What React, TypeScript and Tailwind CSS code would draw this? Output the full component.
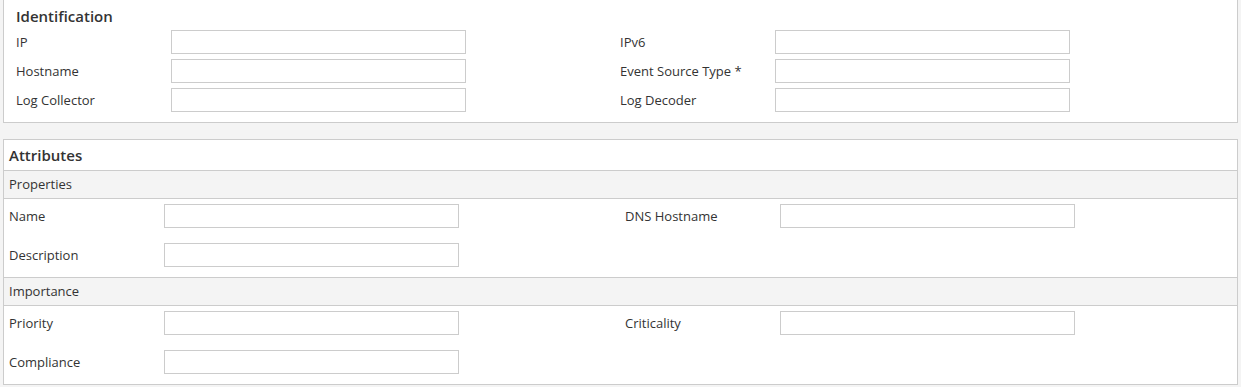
function Field({ label }: { label: string }) {
    return (
        <div className="flex items-center">
            <div className="w-[155px] shrink-0 text-[13px] leading-[24px] text-[#333]">{label}</div>
            <input className="w-[295px] h-[24px] border border-[#cccccc] bg-white outline-none" />
        </div>
    );
}

function AttrRow({ left, right }: { left: string; right?: string }) {
    return (
        <div className="grid grid-cols-[616px_1fr] h-[39px] pt-[5px]">
            <div className="pl-[5px]">
                <Field label={left} />
            </div>
            <div className="pl-[5px]">{right && <Field label={right} />}</div>
        </div>
    );
}

function SectionHeader({ title }: { title: string }) {
    return (
        <div className="h-[28px] bg-[#f4f4f4] border-b border-[#cccccc] pl-[5px] text-[13px] leading-[27px] text-[#333]">
            {title}
        </div>
    );
}

export default function App() {
    return (
        <div className="min-h-[387px] bg-[#f4f4f4] font-['Open_Sans',sans-serif] pb-[4px]">
            <div className="ml-[3px] w-[1235px] bg-white border-x border-b border-[#cccccc] px-[12px] pt-[6px] pb-[10px]">
                <h2 className="h-[20px] text-[15px] leading-[20px] font-semibold text-[#333]">Identification</h2>
                <div className="mt-[4px] grid grid-cols-[604px_1fr] gap-y-[5px]">
                    <Field label="IP" />
                    <Field label="IPv6" />
                    <Field label="Hostname" />
                    <Field label="Event Source Type *" />
                    <Field label="Log Collector" />
                    <Field label="Log Decoder" />
                </div>
            </div>

            <div className="ml-[3px] mt-[16px] w-[1235px] bg-white border border-[#cccccc]">
                <div className="h-[31px] border-b border-[#cccccc] pl-[5px] text-[15px] leading-[30px] font-semibold text-[#333]">
                    Attributes
                </div>
                <SectionHeader title="Properties" />
                <div className="border-b border-[#cccccc]">
                    <AttrRow left="Name" right="DNS Hostname" />
                    <AttrRow left="Description" />
                </div>
                <SectionHeader title="Importance" />
                <div>
                    <AttrRow left="Priority" right="Criticality" />
                    <AttrRow left="Compliance" />
                </div>
            </div>
        </div>
    );
}
